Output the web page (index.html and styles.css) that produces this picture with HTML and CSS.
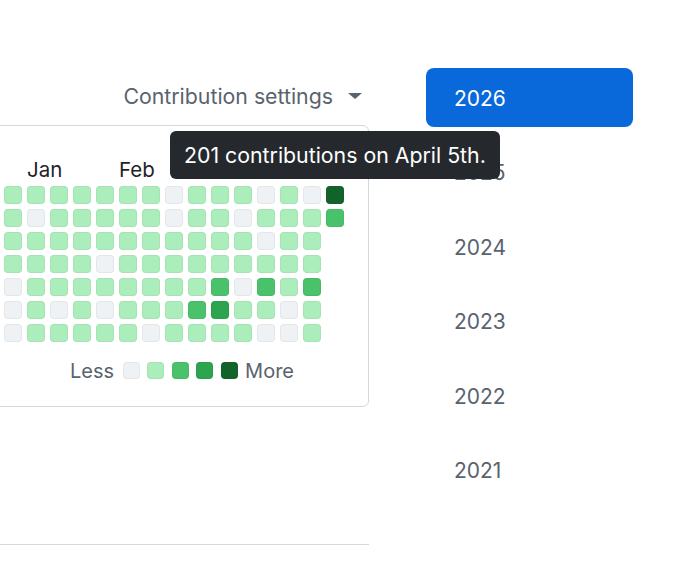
FILE: index.html
```html
<html>
  <head>
    <link rel="stylesheet" href="styles.css">
  </head>
  <body>
    <div class="layout">
      <div class="main">
        <div class="settings">
          <span>Contribution settings</span>
          <span class="caret"></span>
        </div>
        <div class="calendar">
          <div class="months">
            <span class="month jan">Jan</span>
            <span class="month feb">Feb</span>
          </div>
          <div id="days" class="days"></div>
          <div class="legend">
            <span>Less</span>
            <span class="day level-0"></span>
            <span class="day level-1"></span>
            <span class="day level-2"></span>
            <span class="day level-3"></span>
            <span class="day level-4"></span>
            <span>More</span>
          </div>
        </div>
        <div class="divider"></div>
      </div>
      <ul class="years">
        <li class="year selected">2026</li>
        <li class="year">2025</li>
        <li class="year">2024</li>
        <li class="year">2023</li>
        <li class="year">2022</li>
        <li class="year">2021</li>
      </ul>
    </div>
    <div class="tooltip">201 contributions on April 5th.</div>
    <script>
      // one string per weekday, one digit per week (contribution level)
      var weeks = [
        '111111101110104',
        '101111101101112',
        '11111111111011',
        '11110111111111',
        '01111111120212',
        '01010111231101',
        '01111101111001'
      ];
      var days = document.getElementById('days');
      for (var r = 0; r < weeks.length; r++) {
        for (var c = 0; c < weeks[r].length; c++) {
          var cell = document.createElement('span');
          cell.className = 'day level-' + weeks[r][c];
          cell.style.gridRow = r + 1;
          cell.style.gridColumn = c + 1;
          days.appendChild(cell);
        }
      }
    </script>
  </body>
</html>
```

FILE: styles.css
```css
body { margin:0; background:#fff; font-family:"Inter", "Liberation Sans", sans-serif; color:#1f2328; overflow:hidden; }
.layout { display:flex; align-items:flex-start; }
.main { width:369px; flex:none; }

.settings { display:flex; justify-content:flex-end; align-items:center; gap:15px; padding:81px 7px 0 0; height:30px; margin-bottom:14px; font-size:21.3px; line-height:30px; color:#59636e; }
.caret { width:0; height:0; border-left:7px solid transparent; border-right:7px solid transparent; border-top:6px solid #59636e; margin-top:0; }

.calendar { margin-left:-16px; padding:32px 0 27px 19px; border:1px solid #d1d9e0; border-radius:6px; }
.months { display:grid; grid-template-columns:repeat(15, 18px); column-gap:5px; height:24px; margin-bottom:4px; font-size:20.5px; line-height:24px; }
.month { white-space:nowrap; }
.month.jan { grid-column:2; }
.month.feb { grid-column:6; }

.days { display:grid; grid-template-columns:repeat(15, 18px); grid-template-rows:repeat(7, 18px); gap:5px; }
.day { display:block; width:18px; height:18px; border-radius:4px; box-shadow:inset 0 0 0 1px rgba(31,35,40,0.05); }
.level-0 { background:#eff2f5; }
.level-1 { background:#aceebb; }
.level-2 { background:#4ac26b; }
.level-3 { background:#2da44e; }
.level-4 { background:#116329; }

.legend { display:flex; align-items:center; gap:7.5px; height:17px; margin:20px 0 0 66px; font-size:20px; color:#59636e; }
.legend .day { width:17px; height:17px; }
.legend span:first-child { margin-right:1px; }

.divider { margin-top:137px; border-top:1px solid #d1d9e0; }

.years { list-style:none; margin:68px 0 0 57px; padding:0; width:207px; display:flex; flex-direction:column; gap:15.4px; }
.year { height:59px; padding-left:28px; border-radius:8px; font-size:21px; line-height:61px; color:#59636e; }
.year.selected { background:#0969da; color:#fff; }

.tooltip { position:absolute; left:170px; top:131px; width:330px; height:48px; box-sizing:border-box; padding:0 14px; border-radius:6px; background:#25292e; color:#fff; font-size:21.3px; line-height:48px; white-space:nowrap; }
```
